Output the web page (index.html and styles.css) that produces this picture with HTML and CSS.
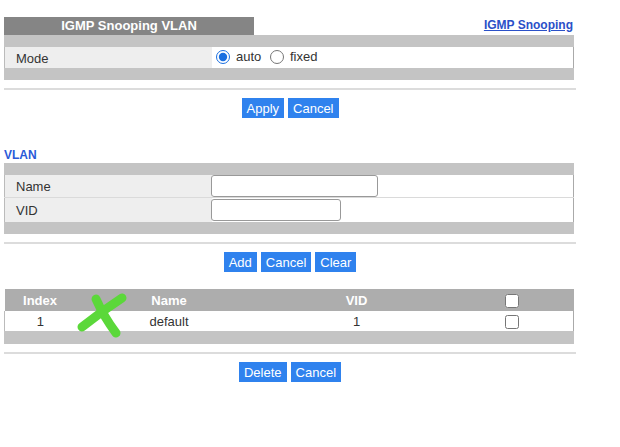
FILE: index.html
```html
<!DOCTYPE html>
<html lang="en">
<head>
  <meta charset="UTF-8" />
  <title>IGMP Snooping VLAN</title>
  <link rel="stylesheet" href="styles.css">
</head>
<body>
  <div class="page">
    <div class="head">
      <div class="tab">IGMP Snooping VLAN</div>
      <a class="link" href="#">IGMP Snooping</a>
    </div>

    <div class="box">
      <table class="form">
        <tr class="mode-row">
          <td class="label">Mode</td>
          <td class="value">
            <label class="opt"><input type="radio" name="mode" checked /> auto</label>
            <label class="opt"><input type="radio" name="mode" /> fixed</label>
          </td>
        </tr>
      </table>
    </div>

    <div class="sep"></div>
    <div class="actions">
      <button>Apply</button>
      <button>Cancel</button>
    </div>

    <div class="sec-title">VLAN</div>
    <div class="box">
      <table class="form">
        <tr class="name-row">
          <td class="label">Name</td>
          <td class="value"><input type="text" class="txt txt-name" /></td>
        </tr>
        <tr class="vid-row">
          <td class="label">VID</td>
          <td class="value"><input type="text" class="txt txt-vid" /></td>
        </tr>
      </table>
    </div>

    <div class="sep"></div>
    <div class="actions">
      <button>Add</button>
      <button>Cancel</button>
      <button>Clear</button>
    </div>

    <div class="list">
      <table class="grid">
        <tr class="grid-head">
          <th class="c-index">Index</th>
          <th class="c-name">Name</th>
          <th class="c-vid">VID</th>
          <th class="c-chk"><input type="checkbox" /></th>
        </tr>
        <tr class="grid-row">
          <td>1</td>
          <td>default</td>
          <td>1</td>
          <td><input type="checkbox" /></td>
        </tr>
      </table>
      <div class="band"></div>
      <svg class="mark" width="60" height="52" viewBox="0 0 60 52">
        <path d="M26 10 Q34 28 46 44" stroke="#5bd83a" stroke-width="9" stroke-linecap="round" fill="none"/>
        <path d="M52 9 Q32 22 12 38" stroke="#5bd83a" stroke-width="9" stroke-linecap="round" fill="none"/>
      </svg>
    </div>

    <div class="sep"></div>
    <div class="actions">
      <button>Delete</button>
      <button>Cancel</button>
    </div>
  </div>
</body>
</html>
```

FILE: styles.css
```css
body {
  margin: 0;
  font-family: "Liberation Sans", Arial, sans-serif;
  font-size: 13px;
  color: #333;
  background: #fff;
}

.page {
  padding: 17px 0 0 4px;
  width: 572px;
}

.head {
  display: flex;
  justify-content: space-between;
  align-items: flex-end;
  width: 570px;
}

.tab {
  width: 250px;
  height: 18px;
  line-height: 18px;
  background: #858585;
  color: #fff;
  font-weight: bold;
  font-size: 13px;
  text-align: center;
}

.link {
  color: #2a50c8;
  font-weight: bold;
  font-size: 12px;
  margin-bottom: 3px;
  margin-right: 1px;
}

.box {
  width: 570px;
  background: #c4c4c4;
  padding: 12px 0;
}

.form {
  width: 100%;
  border-collapse: collapse;
}

.form td {
  padding: 0;
  border-bottom: 1px solid #dadada;
}

.form tr:last-child td {
  border-bottom: none;
}

.form .label {
  width: 196px;
  background: #eeeeee;
  padding-left: 11px;
  border-left: 1px solid #bbb;
}

.form .value {
  background: #fff;
  border-right: 1px solid #aaa;
}

.mode-row td {
  height: 20px;
  padding-top: 1px;
}

.name-row td {
  height: 22px;
}

.vid-row td {
  height: 24px;
}

.opt {
  display: inline-flex;
  align-items: center;
  gap: 6px;
  margin-right: 1px;
}

.opt input {
  width: 14px;
  height: 14px;
  margin: 0 0 0 4px;
  accent-color: #1a6fe0;
}

.txt {
  display: block;
  box-sizing: border-box;
  height: 22px;
  border: 1px solid #999;
  border-radius: 3px;
  margin: 0 0 0 -1px;
  padding: 0 4px;
}

.txt-name {
  width: 167px;
}

.txt-vid {
  width: 130px;
}

.sep {
  width: 572px;
  height: 2px;
  background: #dcdcdc;
  margin-top: 8px;
}

.actions {
  display: flex;
  justify-content: center;
  gap: 4px;
  margin-top: 8px;
}

.actions button {
  height: 20px;
  padding: 0 5px;
  border: none;
  background: #2f82ee;
  color: #fff;
  font-family: "Liberation Sans", Arial, sans-serif;
  font-size: 13px;
  cursor: pointer;
}

.sec-title {
  margin-top: 29px;
  height: 16px;
  line-height: 16px;
  color: #2a5ad8;
  font-weight: bold;
  font-size: 12px;
}

.list {
  position: relative;
  width: 570px;
  margin-top: 17px;
}

.grid {
  width: 100%;
  border-collapse: collapse;
  text-align: center;
}

.grid th {
  height: 22px;
  padding: 0;
  background: #adadad;
  color: #fff;
  font-weight: bold;
  font-size: 13px;
}

.grid td {
  height: 20px;
  padding: 0;
  background: #fff;
}

.grid-row td:first-child {
  border-left: 1px solid #bbb;
}

.grid-row td:last-child {
  border-right: 1px solid #aaa;
}

.c-index {
  width: 71px;
}

.c-name {
  width: 187px;
}

.c-vid {
  width: 188px;
}

.grid input {
  width: 14px;
  height: 14px;
  margin: 0;
  vertical-align: middle;
}

.band {
  height: 13px;
  background: #c4c4c4;
}

.mark {
  position: absolute;
  left: 66px;
  top: 0;
}
```
